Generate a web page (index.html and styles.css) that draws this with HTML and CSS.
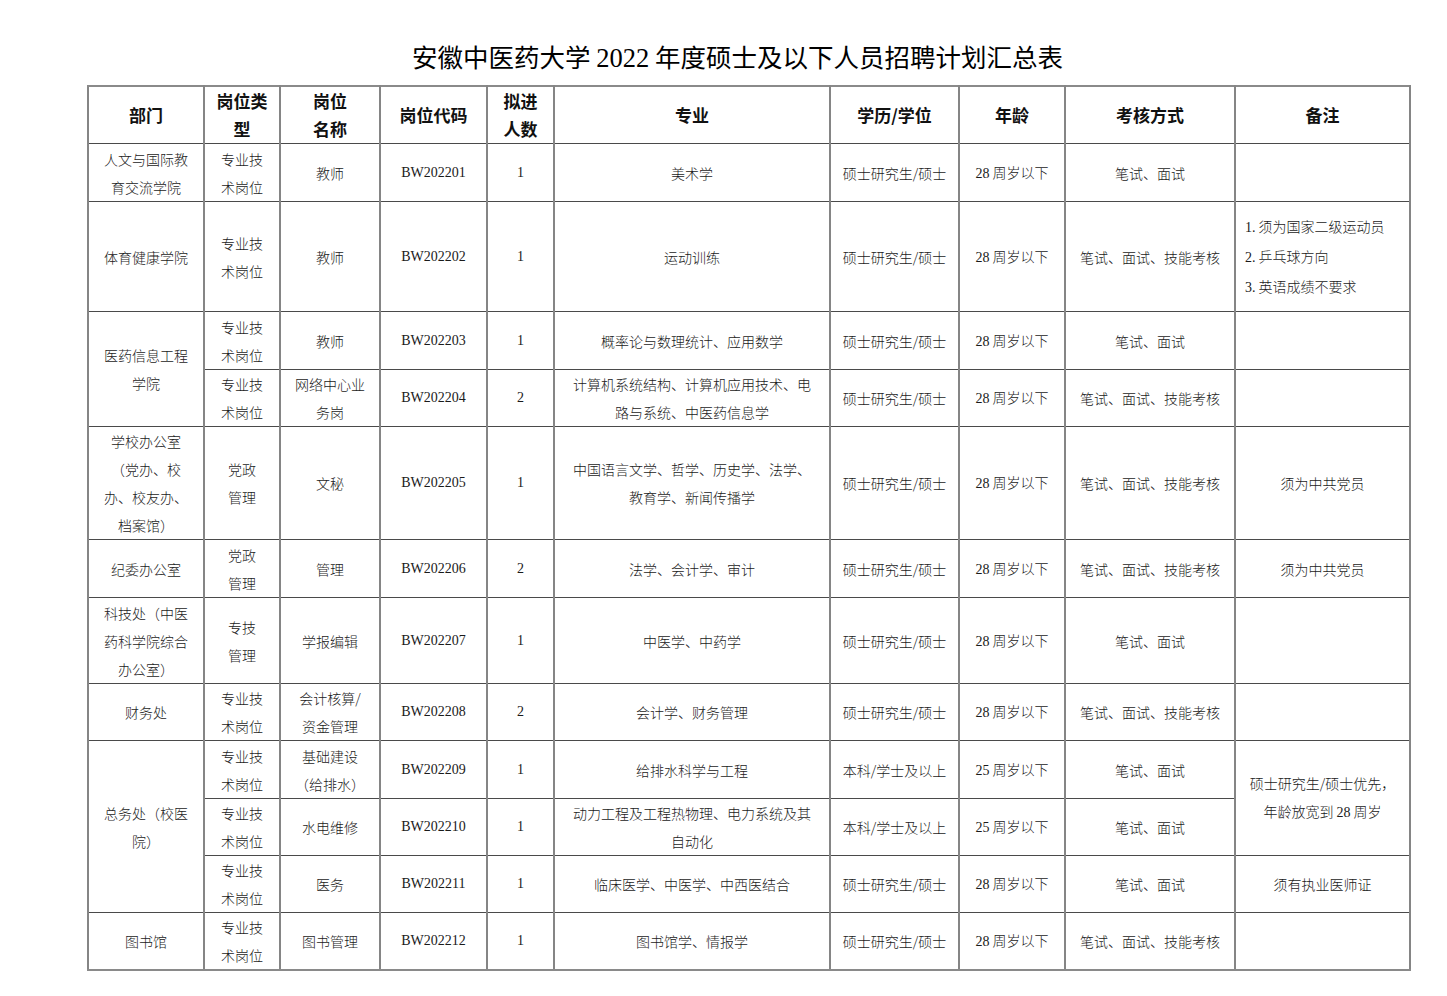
FILE: index.html
```html
<!DOCTYPE html>
<html lang="zh-CN">
<head>
<meta charset="utf-8">
<title>安徽中医药大学2022年度硕士及以下人员招聘计划汇总表</title>
<link rel="stylesheet" href="styles.css">
</head>
<body>
<div class="page">
  <h1 class="title">安徽中医药大学 <span class="num">2022</span> 年度硕士及以下人员招聘计划汇总表</h1>
  <table class="plan">
    <colgroup>
      <col class="c-dept"><col class="c-type"><col class="c-name"><col class="c-code"><col class="c-cnt">
      <col class="c-major"><col class="c-edu"><col class="c-age"><col class="c-exam"><col class="c-note">
    </colgroup>
    <thead>
      <tr class="h57">
        <th>部门</th><th>岗位类<br>型</th><th>岗位<br>名称</th><th>岗位代码</th><th>拟进<br>人数</th>
        <th>专业</th><th>学历/学位</th><th>年龄</th><th>考核方式</th><th>备注</th>
      </tr>
    </thead>
    <tbody>
      <tr class="h58">
        <td>人文与国际教<br>育交流学院</td><td>专业技<br>术岗位</td><td>教师</td><td class="code">BW202201</td><td class="code">1</td>
        <td>美术学</td><td>硕士研究生/硕士</td><td><span class="num">28</span> 周岁以下</td><td>笔试、面试</td><td></td>
      </tr>
      <tr class="h110">
        <td>体育健康学院</td><td>专业技<br>术岗位</td><td>教师</td><td class="code">BW202202</td><td class="code">1</td>
        <td>运动训练</td><td>硕士研究生/硕士</td><td><span class="num">28</span> 周岁以下</td><td>笔试、面试、技能考核</td>
        <td class="left"><span class="num">1.</span> 须为国家二级运动员<br><span class="num">2.</span> 乒乓球方向<br><span class="num">3.</span> 英语成绩不要求</td>
      </tr>
      <tr class="h58">
        <td rowspan="2">医药信息工程<br>学院</td><td>专业技<br>术岗位</td><td>教师</td><td class="code">BW202203</td><td class="code">1</td>
        <td>概率论与数理统计、应用数学</td><td>硕士研究生/硕士</td><td><span class="num">28</span> 周岁以下</td><td>笔试、面试</td><td></td>
      </tr>
      <tr class="h57">
        <td>专业技<br>术岗位</td><td>网络中心业<br>务岗</td><td class="code">BW202204</td><td class="code">2</td>
        <td>计算机系统结构、计算机应用技术、电<br>路与系统、中医药信息学</td><td>硕士研究生/硕士</td><td><span class="num">28</span> 周岁以下</td><td>笔试、面试、技能考核</td><td></td>
      </tr>
      <tr class="h113">
        <td>学校办公室<br>（党办、校<br>办、校友办、<br>档案馆）</td><td>党政<br>管理</td><td>文秘</td><td class="code">BW202205</td><td class="code">1</td>
        <td>中国语言文学、哲学、历史学、法学、<br>教育学、新闻传播学</td><td>硕士研究生/硕士</td><td><span class="num">28</span> 周岁以下</td><td>笔试、面试、技能考核</td><td>须为中共党员</td>
      </tr>
      <tr class="h58">
        <td>纪委办公室</td><td>党政<br>管理</td><td>管理</td><td class="code">BW202206</td><td class="code">2</td>
        <td>法学、会计学、审计</td><td>硕士研究生/硕士</td><td><span class="num">28</span> 周岁以下</td><td>笔试、面试、技能考核</td><td>须为中共党员</td>
      </tr>
      <tr class="h86">
        <td>科技处（中医<br>药科学院综合<br>办公室）</td><td>专技<br>管理</td><td>学报编辑</td><td class="code">BW202207</td><td class="code">1</td>
        <td>中医学、中药学</td><td>硕士研究生/硕士</td><td><span class="num">28</span> 周岁以下</td><td>笔试、面试</td><td></td>
      </tr>
      <tr class="h57">
        <td>财务处</td><td>专业技<br>术岗位</td><td>会计核算/<br>资金管理</td><td class="code">BW202208</td><td class="code">2</td>
        <td>会计学、财务管理</td><td>硕士研究生/硕士</td><td><span class="num">28</span> 周岁以下</td><td>笔试、面试、技能考核</td><td></td>
      </tr>
      <tr class="h58">
        <td rowspan="3">总务处（校医<br>院）</td><td>专业技<br>术岗位</td><td>基础建设<br>（给排水）</td><td class="code">BW202209</td><td class="code">1</td>
        <td>给排水科学与工程</td><td>本科/学士及以上</td><td><span class="num">25</span> 周岁以下</td><td>笔试、面试</td>
        <td rowspan="2">硕士研究生/硕士优先，<br>年龄放宽到 <span class="num">28</span> 周岁</td>
      </tr>
      <tr class="h57">
        <td>专业技<br>术岗位</td><td>水电维修</td><td class="code">BW202210</td><td class="code">1</td>
        <td>动力工程及工程热物理、电力系统及其<br>自动化</td><td>本科/学士及以上</td><td><span class="num">25</span> 周岁以下</td><td>笔试、面试</td>
      </tr>
      <tr class="h57">
        <td>专业技<br>术岗位</td><td>医务</td><td class="code">BW202211</td><td class="code">1</td>
        <td>临床医学、中医学、中西医结合</td><td>硕士研究生/硕士</td><td><span class="num">28</span> 周岁以下</td><td>笔试、面试</td><td>须有执业医师证</td>
      </tr>
      <tr class="h57">
        <td>图书馆</td><td>专业技<br>术岗位</td><td>图书管理</td><td class="code">BW202212</td><td class="code">1</td>
        <td>图书馆学、情报学</td><td>硕士研究生/硕士</td><td><span class="num">28</span> 周岁以下</td><td>笔试、面试、技能考核</td><td></td>
      </tr>
    </tbody>
  </table>
</div>
</body>
</html>
```

FILE: styles.css
```css
html, body {
  margin: 0;
  padding: 0;
  background: #ffffff;
}

.page {
  padding: 38px 0 20px 87px;
  font-family: "Noto Sans CJK SC", sans-serif;
  color: #111;
}

.title {
  width: 1301px;
  margin: 0 0 11px 0;
  padding-right: 20px;
  height: 36px;
  line-height: 36px;
  text-align: center;
  font-size: 25.5px;
  font-weight: 400;
  color: #000;
  letter-spacing: 0;
}

.title .num {
  font-family: "Liberation Serif", serif;
  font-size: 26.5px;
}

.plan {
  border-collapse: collapse;
  table-layout: fixed;
  width: 1322px;
}

.c-dept { width: 116px; }
.c-type { width: 76px; }
.c-name { width: 100px; }
.c-code { width: 107px; }
.c-cnt { width: 67px; }
.c-major { width: 276px; }
.c-edu { width: 129px; }
.c-age { width: 106px; }
.c-exam { width: 170px; }
.c-note { width: 175px; }

.plan th,
.plan td {
  border-left: 2px solid #858585;
  border-right: 2px solid #858585;
  border-top: 1px solid #4a4a4a;
  border-bottom: 1px solid #4a4a4a;
  padding: 0 4px;
  text-align: center;
  vertical-align: middle;
  overflow: hidden;
  white-space: nowrap;
}

.plan thead th {
  border-top: 2px solid #8a8a8a;
  font-size: 17px;
  font-weight: 700;
  line-height: 28px;
  color: #111;
}

.plan td {
  font-size: 14px;
  font-weight: 300;
  line-height: 28px;
  color: #1a1a1a;
}

.plan tbody tr:last-child td {
  border-bottom: 2px solid #8a8a8a;
}

.plan td.left {
  text-align: left;
  padding-left: 9px;
}

.plan td.code {
  font-family: "Liberation Serif", serif;
  font-size: 14px;
  font-weight: 400;
}

.num {
  font-family: "Liberation Serif", serif;
}

.h57 { height: 57px; }
.h58 { height: 58px; }
.h86 { height: 86px; }
.h110 { height: 110px; }
.h113 { height: 113px; }
```
